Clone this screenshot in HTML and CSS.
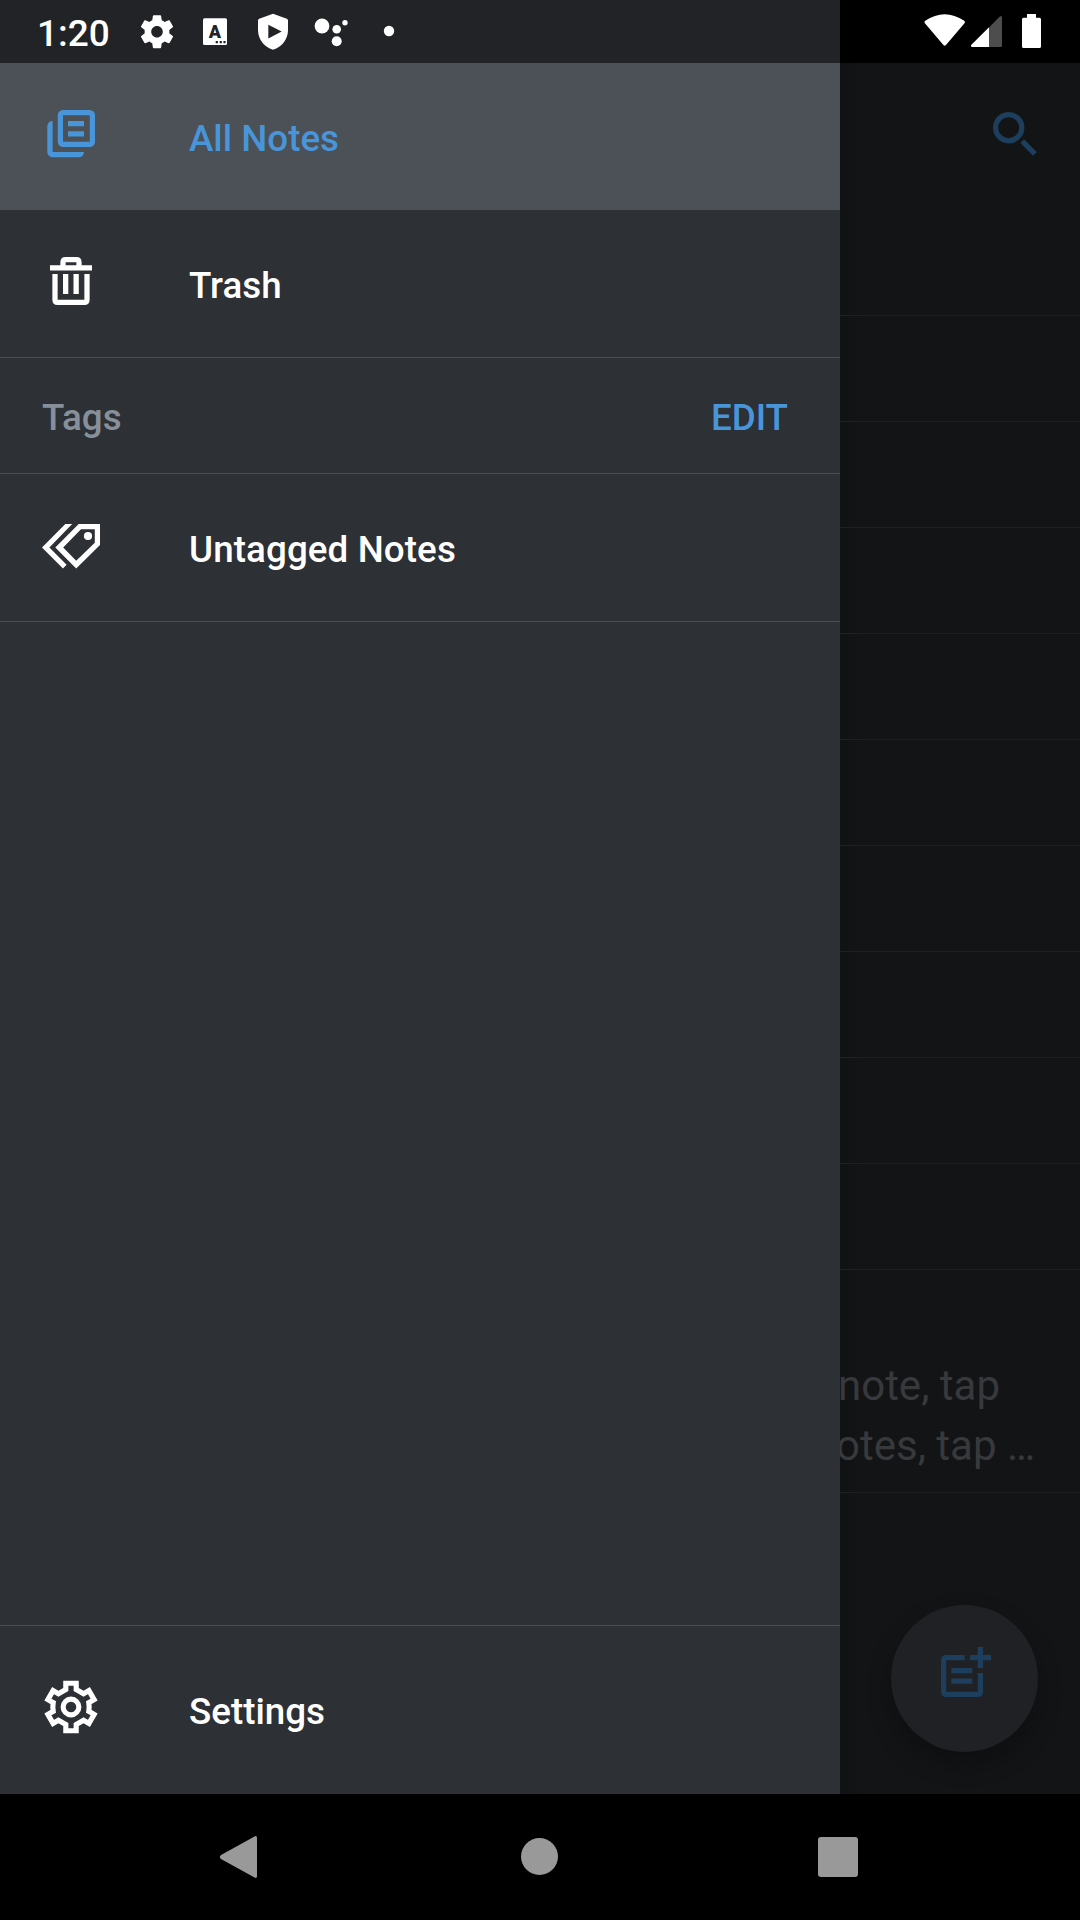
FILE: index.html
```html
<!DOCTYPE html>
<html lang="en">
<head>
<meta charset="utf-8">
<title>Notes</title>
<link rel="stylesheet" href="styles.css">
</head>
<body>
<div class="screen">
  <header class="status">
    <div class="status-left">
      <span class="clock">1:20</span>
      <svg class="notifications" width="290" height="63" viewBox="130 0 290 63">
        <path transform="translate(137.2 11.9) scale(1.65)" fill-rule="evenodd" d="M19.43 12.98c.04-.32.07-.64.07-.98s-.03-.66-.07-.98l2.11-1.65c.19-.15.24-.42.12-.64l-2-3.46c-.12-.22-.39-.3-.61-.22l-2.49 1c-.52-.4-1.08-.73-1.69-.98l-.38-2.65C14.46 2.18 14.25 2 14 2h-4c-.25 0-.46.18-.49.42l-.38 2.65c-.61.25-1.17.59-1.69.98l-2.49-1c-.23-.09-.49 0-.61.22l-2 3.46c-.13.22-.07.49.12.64l2.11 1.65c-.04.32-.07.65-.07.98s.03.66.07.98l-2.11 1.65c-.19.15-.24.42-.12.64l2 3.46c.12.22.39.3.61.22l2.49-1c.52.4 1.08.73 1.69.98l.38 2.65c.03.24.24.42.49.42h4c.25 0 .46-.18.49-.42l.38-2.65c.61-.25 1.17-.59 1.69-.98l2.49 1c.23.09.49 0 .61-.22l2-3.46c.12-.22.07-.49-.12-.64l-2.11-1.65zM12 15.5c-1.93 0-3.5-1.57-3.5-3.5s1.57-3.5 3.5-3.5 3.5 1.57 3.5 3.5-1.57 3.5-3.5 3.5z"/>
        <rect x="203" y="18.3" width="24" height="26.7" rx="1.5"/>
        <text class="badge-letter" x="215" y="38" text-anchor="middle">A</text>
        <path class="cutout" d="M215.7 41h2.2v2.2h-2.2zM219.7 41h2.2v2.2h-2.2zM223.4 41h2.2v2.2h-2.2z"/>
        <path d="M273 13.7 286.8 18.8Q288 19.3 288 20.6V30C288 39 282 47 273 49.7 264 47 258 39 258 30V20.6Q258 19.3 259.2 18.8Z"/>
        <path class="cutout" d="M268.3 24.7 281.7 31.6 268.3 38.4Z"/>
        <circle cx="322" cy="26" r="7.4"/><circle cx="336.7" cy="29.2" r="4.3"/><circle cx="336.7" cy="41.3" r="5"/><circle cx="345" cy="22.7" r="2.7"/>
        <circle cx="389" cy="31" r="5.2"/>
      </svg>
    </div>
    <svg class="system" width="140" height="63" viewBox="910 0 140 63">
      <path d="M924.7 23Q923.9 21.7 925.2 20.8 944.7 7.6 964.2 20.8 965.5 21.7 964.7 23L946 45Q944.7 46.6 943.4 45Z"/>
      <path class="faint" d="M989 27.5 999.8 16.6Q1002 14.8 1002 17.5V45.5Q1002 47 1000.5 47H989Z"/>
      <path d="M989 27.2V47H972.3Q970.2 46.6 971.4 44.8Z"/>
      <path d="M1027 17.7V14H1036V17.7H1039.5Q1041 17.7 1041 19.2V46.5Q1041 48 1039.5 48H1023.5Q1022 48 1022 46.5V19.2Q1022 17.7 1023.5 17.7Z"/>
    </svg>
  </header>

  <main class="app">
    <nav class="drawer">
      <a class="item selected">
        <svg width="189" height="147" viewBox="0 63 189 147">
          <rect class="line" x="60.4" y="112.6" width="32" height="31.8" rx="2.6"/>
          <path d="M68 121h16v5.2H68zM68 131.2h16v5.2H68zM52.6 121V152H84a5.2 5.2 0 0 1-5.2 5.3H52.6a5.3 5.3 0 0 1-5.3-5.3V126.2a5.2 5.2 0 0 1 5.3-5.2z"/>
        </svg>
        <span>All Notes</span>
      </a>
      <a class="item">
        <svg width="189" height="147" viewBox="0 210 189 147">
          <path d="M50 265.3h42v5.3H50zM63 274h5.3v20H63zM73.5 274h5.3v20h-5.3z"/>
          <path class="line" d="M63 267v-4.7q0-2.6 2.6-2.6h10.8q2.6 0 2.6 2.6V267M55 274v25.7q0 2.6 2.6 2.6h26.8q2.6 0 2.6-2.6V274"/>
        </svg>
        <span>Trash</span>
      </a>
      <div class="tags-header">
        <span>Tags</span>
        <a class="edit">EDIT</a>
      </div>
      <a class="item untagged">
        <svg width="189" height="147" viewBox="0 474 189 147">
          <path fill-rule="evenodd" d="M78.7 524H100V545L76.2 568.4 55.3 547.4ZM81 529.2 63.2 547.4 76.2 560.8 94.8 542.8V529.2Z"/>
          <path d="M65.3 524H72.2L49.4 547.4 66.6 564.7 63 568.4 42 547.4Z"/>
          <circle cx="88" cy="536" r="4.1"/>
        </svg>
        <span>Untagged Notes</span>
      </a>
      <a class="item settings">
        <svg width="189" height="168" viewBox="0 1626 189 168">
          <g class="line" transform="translate(71 1707) scale(.98)">
            <circle r="8"/>
            <path d="M-5.3-24.2H5.3V-17.9L12.85-13.5 18.3-16.7 23.6-7.5 18.15-4.4Q18.9 0 18.15 4.4L23.6 7.5 18.3 16.7 12.85 13.5 5.3 17.9V24.2H-5.3V17.9L-12.85 13.5-18.3 16.7-23.6 7.5-18.15 4.4Q-18.9 0-18.15-4.4L-23.6-7.5-18.3-16.7-12.85-13.5-5.3-17.9Z"/>
          </g>
        </svg>
        <span>Settings</span>
      </a>
    </nav>

    <section class="notes">
      <div class="toolbar">
        <svg class="blue" width="60" height="60" viewBox="984 102 60 60">
          <circle class="line" cx="1008.7" cy="127.7" r="13.1"/>
          <path class="line" d="M1022.2 141.2 1034.9 153.9"/>
        </svg>
      </div>
      <div class="row"></div><div class="row"></div><div class="row"></div><div class="row"></div><div class="row"></div>
      <div class="row"></div><div class="row"></div><div class="row"></div><div class="row"></div><div class="row"></div>
      <div class="row preview">
        <p class="first">note, tap</p>
        <p class="second">otes, tap …</p>
      </div>
      <button class="fab">
        <svg class="blue" width="147" height="147" viewBox="891 1605 147 147">
          <path class="line" d="M964.7 1657.7H946.2q-2.6 0-2.6 2.6V1691.8q0 2.6 2.6 2.6H977.8q2.6 0 2.6-2.6V1673"/>
          <path d="M951.3 1668h21v5.2h-21zM951.3 1678.6h21v5.2h-21zM970 1655h21v5.2h-21zM977.7 1647h5.3v21h-5.3z"/>
        </svg>
      </button>
    </section>
  </main>

  <footer class="navbar">
    <svg width="1080" height="126" viewBox="0 1794 1080 126">
      <path d="M221 1855 254.5 1836.4Q257 1835.4 257 1838V1876Q257 1878.8 254.5 1877.6L221 1859Q218.6 1857 221 1855Z"/>
      <circle cx="539.5" cy="1856.5" r="18.5"/>
      <rect x="818" y="1837" width="40" height="40" rx="3"/>
    </svg>
  </footer>
</div>
</body>
</html>
```
FILE: styles.css
```css
* { box-sizing: border-box; }

body {
  margin: 0;
  background: #000;
  font-family: Roboto, sans-serif;
}

svg { display: block; fill: currentColor; }
p { margin: 0; }

.line {
  fill: none;
  stroke: currentColor;
  stroke-width: 5.25;
}

.screen {
  width: 1080px;
  height: 1920px;
  display: flex;
  flex-direction: column;
  overflow: hidden;
}

/* Status bar */
.status {
  height: 63px;
  display: flex;
  justify-content: space-between;
  color: #fff;
  padding-right: 30px;
}

.status-left {
  width: 840px;
  display: flex;
  background: #222326;
}

.clock {
  width: 130px;
  padding-left: 37px;
  font-size: 37px;
  font-weight: 500;
  line-height: 67px;
}

.cutout, .badge-letter { fill: #222326; }
.badge-letter { font-size: 18px; font-weight: 900; }
.faint { fill: #4d4d4d; }

/* Drawer and notes list */
.app {
  height: 1731px;
  display: grid;
  grid-template-columns: 840px 240px;
}

.drawer {
  display: flex;
  flex-direction: column;
  background: #2d3035;
  color: #fff;
  font-size: 36.75px;
  font-weight: 500;
}

.item {
  height: 148px;
  display: flex;
  align-items: center;
  border-bottom: 1px solid #4b4e52;
}

.item span, .tags-header { padding-top: 4px; }
.untagged { letter-spacing: 0.1px; }

.item.selected {
  height: 147px;
  border-bottom: 0;
  background: #4c5057;
  color: #4895d9;
}

.tags-header {
  height: 116px;
  display: flex;
  align-items: center;
  justify-content: space-between;
  padding-left: 42px;
  padding-right: 52px;
  border-bottom: 1px solid #4b4e52;
  color: #87909a;
}

.edit { color: #4895d9; }

.item.settings {
  height: 169px;
  margin-top: auto;
  border-top: 1px solid #4b4e52;
  border-bottom: 0;
}

.item.settings span { padding-top: 2px; }

.notes {
  position: relative;
  overflow: hidden;
  background: linear-gradient(90deg, #111214, #131416 24px);
}

.blue { color: #1d3e5d; }

.toolbar {
  height: 147px;
  display: flex;
  justify-content: flex-end;
  padding: 39px 36px 0 0;
}

.row {
  height: 106px;
  border-bottom: 1px solid #1f2022;
}

.row.preview {
  height: 223px;
  padding-top: 86px;
  display: flex;
  flex-direction: column;
  align-items: flex-end;
  color: #37393c;
  font-size: 42px;
  line-height: 60px;
  white-space: nowrap;
}

.first { padding-right: 80px; }
.second { padding-right: 45px; }

.fab {
  position: absolute;
  right: 42px;
  bottom: 42px;
  width: 147px;
  height: 147px;
  padding: 0;
  border: 0;
  border-radius: 50%;
  background: #202124;
  box-shadow: 0 12px 24px rgba(0, 0, 0, 0.28);
}

/* System navigation */
.navbar {
  height: 126px;
  color: #999;
}
```
